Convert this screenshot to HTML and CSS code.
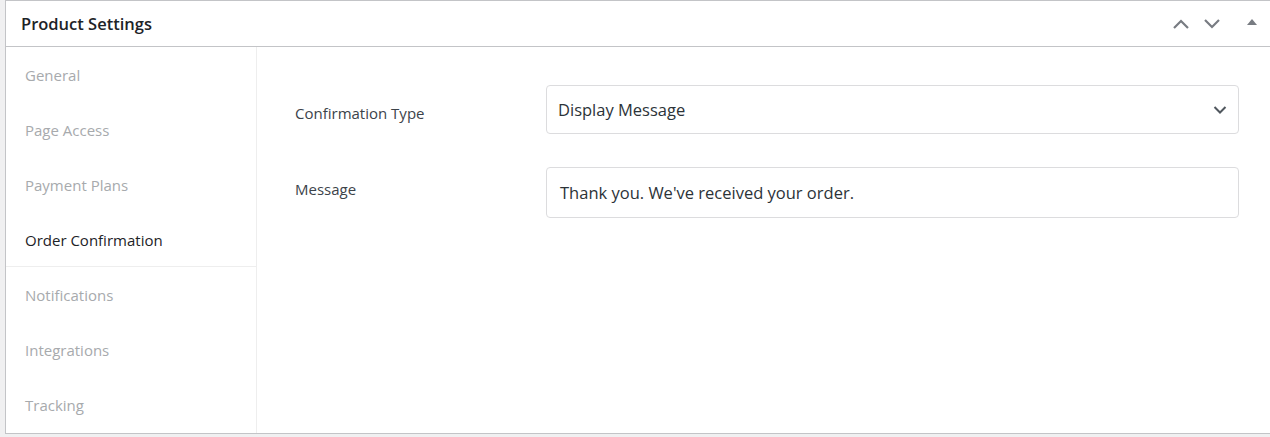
FILE: index.html
```html
<!DOCTYPE html>
<html>
<head>
<meta charset="utf-8">
<link rel="stylesheet" href="styles.css">
</head>
<body>
<div class="panel">
  <div class="panel-header">
    <h2 class="title">Product Settings</h2>
    <div class="actions">
      <svg class="ico" width="18" height="12" viewBox="0 0 18 12"><path d="M2 10 L9 3 L16 10" fill="none" stroke="#787c82" stroke-width="2.2"/></svg>
      <svg class="ico" width="18" height="12" viewBox="0 0 18 12"><path d="M2 2 L9 9 L16 2" fill="none" stroke="#787c82" stroke-width="2.2"/></svg>
      <svg class="ico tri" width="10" height="8" viewBox="0 0 10 8"><path d="M0 7 L5 1 L10 7 Z" fill="#787c82"/></svg>
    </div>
  </div>
  <div class="panel-body">
    <ul class="tabs">
      <li class="tab">General</li>
      <li class="tab">Page Access</li>
      <li class="tab">Payment Plans</li>
      <li class="tab active">Order Confirmation</li>
      <li class="tab">Notifications</li>
      <li class="tab">Integrations</li>
      <li class="tab">Tracking</li>
    </ul>
    <div class="content">
      <div class="form">
        <label class="label label-type">Confirmation Type</label>
        <div class="select">
          <span>Display Message</span>
          <svg width="14" height="10" viewBox="0 0 14 10"><path d="M1.5 2 L7 7.5 L12.5 2" fill="none" stroke="#50575e" stroke-width="2"/></svg>
        </div>
        <label class="label label-msg">Message</label>
        <div class="input">Thank you. We've received your order.</div>
      </div>
    </div>
  </div>
</div>
</body>
</html>
```
FILE: styles.css
```css
* { box-sizing: border-box; }
html, body { margin: 0; padding: 0; }
body {
  background: #f0f0f1;
  font-family: "Open Sans", "Noto Sans", sans-serif;
  color: #1d2327;
  height: 437px;
  overflow: hidden;
}
.panel {
  margin-left: 5px;
  width: 1266px;
  background: #fff;
  border: 1px solid #c3c4c7;
}
.panel-header {
  height: 46px;
  border-bottom: 1px solid #c3c4c7;
  display: flex;
  align-items: center;
  justify-content: space-between;
  padding: 0 13px 0 15px;
}
.title {
  margin: 0;
  font-size: 16.5px;
  font-weight: 600;
  color: #1d2327;
}
.actions {
  display: flex;
  align-items: center;
  gap: 13px;
}
.tri { margin-left: 13px; margin-top: -4px; }
.panel-body {
  display: flex;
  height: 386px;
}
.tabs {
  list-style: none;
  margin: 0;
  padding: 0;
  width: 251px;
  border-right: 1px solid #eeeeee;
  flex-shrink: 0;
}
.tab {
  height: 55px;
  display: flex;
  align-items: center;
  padding-left: 19px;
  padding-top: 1px;
  font-size: 15px;
  color: #a7aaad;
}
.tab.active {
  color: #1d2327;
  border-bottom: 1px solid #eeeeee;
}
.content {
  flex: 1;
  padding: 38px 31px 0 38px;
}
.form {
  display: grid;
  grid-template-columns: 251px 1fr;
  row-gap: 33px;
}
.label {
  font-size: 15px;
  line-height: 20px;
  color: #3c434a;
}
.label-type { padding-top: 18px; }
.label-msg { padding-top: 12px; }
.select {
  height: 49px;
  border: 1px solid #dcdcde;
  border-radius: 4px;
  display: flex;
  align-items: center;
  justify-content: space-between;
  padding: 0 11px 0 11px;
  font-size: 16.5px;
  color: #2c3338;
}
.select svg { margin-top: 1px; }
.input {
  height: 51px;
  border: 1px solid #dcdcde;
  border-radius: 4px;
  display: flex;
  align-items: center;
  padding: 0 13px;
  font-size: 16.5px;
  color: #2c3338;
}
```
